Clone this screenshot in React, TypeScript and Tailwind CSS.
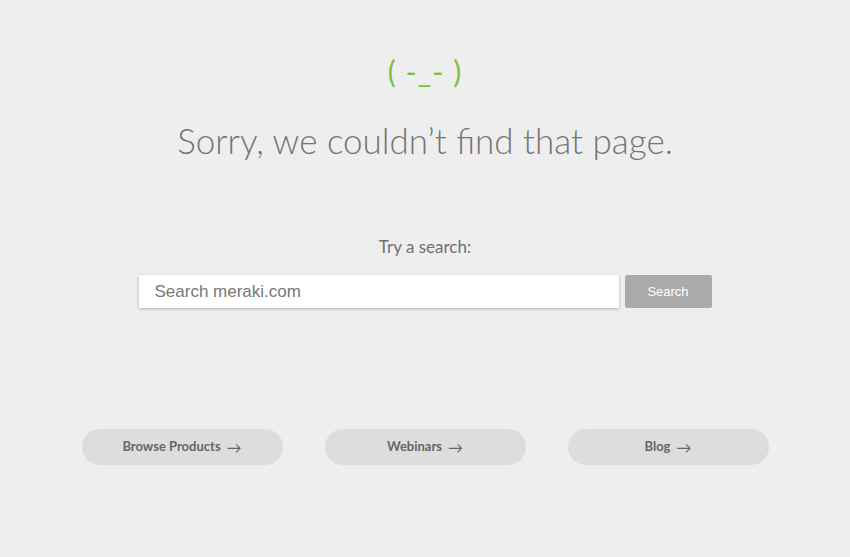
export default function App() {
  const links = ["Browse Products", "Webinars", "Blog"]

  return (
    <div className="w-full h-screen bg-[#eeeeee] flex flex-col items-center font-['Lato','Open_Sans',sans-serif]">
      <div className="mt-[51px] text-[30px] leading-[40px] font-normal text-[#7ac143] tracking-[1px]">
        ( -_- )
      </div>
      <h1 className="mt-[27px] text-[35px] leading-[44px] font-light text-[#757575]">
        Sorry, we couldn’t find that page.
      </h1>
      <p className="mt-[73px] text-[17px] leading-[24px] text-[#707070]">Try a search:</p>
      <div className="mt-[16px] flex gap-[6px]">
        <input
          className="w-[480px] h-[33px] bg-white px-[16px] text-[17px] text-[#555] placeholder-[#777] outline-none shadow-[0_1px_3px_rgba(0,0,0,0.25)] font-['Liberation_Sans',sans-serif]"
          placeholder="Search meraki.com"
        />
        <button className="w-[87px] h-[33px] bg-[#aaaaaa] text-white text-[13px] rounded-[2px] font-['Liberation_Sans',sans-serif]">
          Search
        </button>
      </div>
      <div className="mt-[121px] flex gap-[42px]">
        {links.map((l) => (
          <a
            key={l}
            href="#"
            className="w-[201px] h-[36px] rounded-full bg-[#dddddd] flex items-center justify-center text-[13px] font-bold text-[#666666]"
          >
            {l} <span className="ml-[6px] font-normal text-[15px]">→</span>
          </a>
        ))}
      </div>
    </div>
  )
}
